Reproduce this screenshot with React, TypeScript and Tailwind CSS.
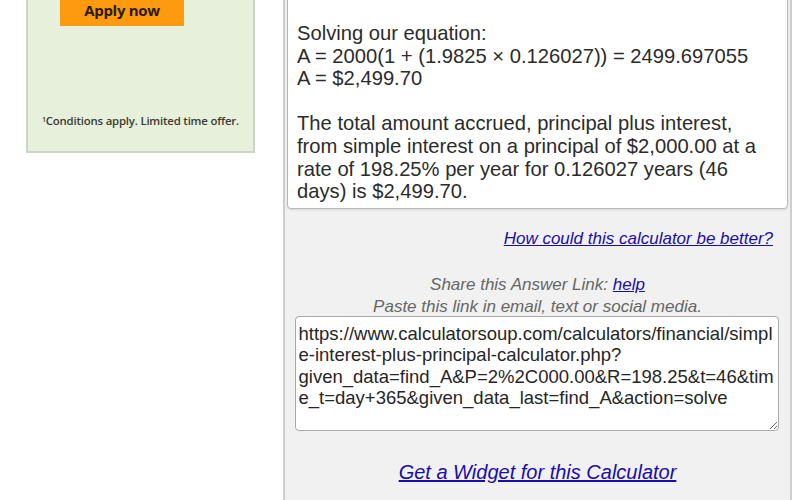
import React from 'react';

const shareUrl =
  'https://www.calculatorsoup.com/calculators/financial/simple-interest-plus-principal-calculator.php?given_data=find_A&P=2%2C000.00&R=198.25&t=46&time_t=day+365&given_data_last=find_A&action=solve';

function AdBox() {
  return (
    <aside className="ml-[26px] mt-[-20px] h-[173px] w-[229px] shrink-0 border-2 border-[#cfd3c8] bg-[#e6f0da] flex flex-col">
      <div className="mt-[12px] ml-[32px] flex h-[32px] w-[124px] items-center justify-center bg-[#fd9a0f] pt-[1px] text-[15px] font-bold tracking-[-0.3px] text-[#2a1a08] font-['Open_Sans',sans-serif]">
        Apply now
      </div>
      <p className="mt-[86px] text-center text-[11.4px] font-semibold tracking-[-0.2px] text-[#3b3b33] font-['Open_Sans',sans-serif]">
        <sup className="text-[7px]">1</sup>Conditions apply. Limited time offer.
      </p>
    </aside>
  );
}

function ResultPanel() {
  return (
    <section className="ml-[28px] h-[520px] mt-[-20px] w-[509px] shrink-0 border-x-2 border-[#cdcdcd] bg-[#f1f1f1] px-[2px] font-['Liberation_Sans',Arial,sans-serif]">
      {/* answer box */}
      <div className="rounded-[4px] border border-[#b9b9b9] bg-white pl-[9px] pr-[24px] pt-[41px] pb-[5px] text-[20.2px] leading-[22.6px] text-[#2b2b2b] shadow-[0_1px_2px_rgba(0,0,0,0.12)]">
        <p>Solving our equation:</p>
        <p>A = 2000(1 + (1.9825 × 0.126027)) = 2499.697055</p>
        <p>A = $2,499.70</p>
        <p className="mt-[22.6px]">
          The total amount accrued, principal plus interest, from simple interest on a principal of $2,000.00 at a rate of 198.25% per year for 0.126027 years (46 days) is $2,499.70.
        </p>
      </div>

      <div className="mt-[19px] pr-[15px] text-right text-[17px] leading-[22px]">
        <a href="#" className="italic text-[#1a0dab] underline">
          How could this calculator be better?
        </a>
      </div>

      <div className="mt-[24px] text-center text-[17px] italic leading-[22px] text-[#666]">
        <p>
          Share this Answer Link: <a href="#" className="text-[#1a0dab] underline">help</a>
        </p>
        <p>Paste this link in email, text or social media.</p>
      </div>

      <div className="mt-[-2px] flex justify-center">
        <textarea
          readOnly
          value={shareUrl}
          className="h-[115px] w-[484px] ml-[-2px] resize rounded-[4px] border border-[#a9a9a9] bg-white px-[3px] pt-[6px] text-[18.5px] leading-[21.5px] text-[#262626] outline-none font-['Liberation_Sans',Arial,sans-serif]"
        />
      </div>

      <div className="mt-[30px] text-center text-[20px] leading-[22px]">
        <a href="#" className="italic text-[#1a0dab] underline">
          Get a Widget for this Calculator
        </a>
      </div>
    </section>
  );
}

export default function App() {
  return (
    <div className="flex h-[500px] w-[800px] overflow-hidden bg-white">
      <AdBox />
      <ResultPanel />
    </div>
  );
}
